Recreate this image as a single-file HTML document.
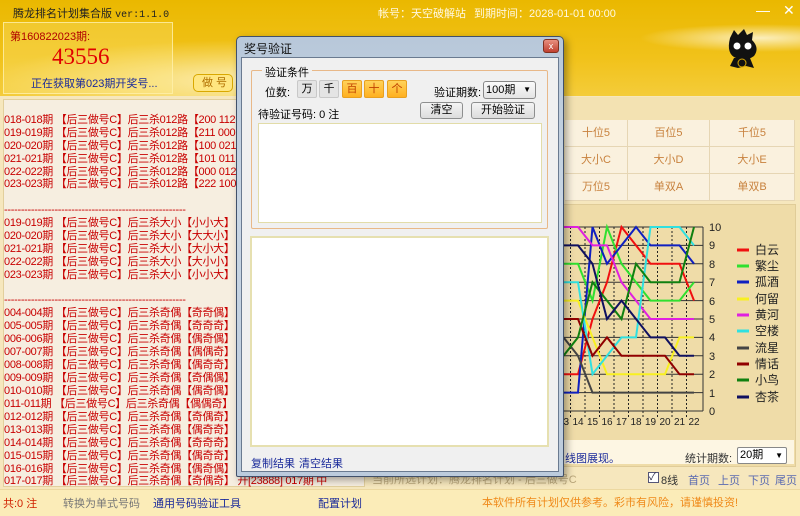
<!DOCTYPE html>
<html><head><meta charset="utf-8"><style>
*{margin:0;padding:0;box-sizing:border-box}
body{width:800px;height:516px;overflow:hidden;position:relative;font-family:"Liberation Sans","Noto Sans CJK SC",sans-serif;font-size:11px;background:#f6e7bd}
.a{position:absolute;white-space:nowrap}
#hdr{left:0;top:0;width:800px;height:96px;background:radial-gradient(ellipse 260px 40px at 250px 80px,rgba(255,250,220,.75),rgba(255,255,255,0)),radial-gradient(ellipse 120px 14px at 760px 38px,rgba(255,250,230,.8),rgba(255,255,255,0)),linear-gradient(180deg,#eab800 0%,#f1c21a 60%,#f4cc3a 100%)}
.row{position:absolute;left:4px;color:#c80000;font-size:11px;line-height:13px;white-space:nowrap;letter-spacing:-0.3px}
.cell{position:absolute;color:#c8823e;font-size:11px;text-align:center;border-right:1px solid #e6d6b4;border-bottom:1px solid #e6d6b4;background:#faf1de;line-height:26px}
.btn{position:absolute;border:1px solid #8e8f8f;border-radius:3px;background:linear-gradient(#f4f4f4,#dcdcdc);text-align:center;font-size:11px;line-height:15px}
.ob{position:absolute;border:1px solid #e8a020;border-radius:2px;background:linear-gradient(#ffd25a,#ffb020);text-align:center;color:#c04000;font-size:11px;line-height:17px;width:20px;height:18px;top:80px}
.gb{position:absolute;border:1px solid #c8c8c8;border-radius:2px;background:#e4e4e4;text-align:center;font-size:11px;line-height:17px;width:20px;height:18px;top:80px}
</style></head><body>
<div id="hdr" class="a"></div>
<div class="a" style="left:13px;top:5px;font-size:11px;color:#222">腾龙排名计划集合版 <span style="font-family:'Liberation Mono',monospace;font-size:10px">ver:1.1.0</span></div>
<div class="a" style="left:378px;top:5px;color:#fff8e0;font-size:11px">帐号：天空破解站</div>
<div class="a" style="left:474px;top:5px;color:#fff8e0;font-size:11px">到期时间：2028-01-01 00:00</div>
<div class="a" style="left:756px;top:2px;color:#fff;font-size:14px">—</div>
<div class="a" style="left:783px;top:2px;color:#fff;font-size:14px">✕</div>
<div class="a" style="left:3px;top:22px;width:170px;height:72px;border:1px solid rgba(255,240,170,.8);background:rgba(255,240,150,.25)"></div>
<div class="a" style="left:10px;top:28px;color:#b00000;font-size:11px">第160822023期:</div>
<div class="a" style="left:52px;top:44px;color:#e00000;font-size:23px;font-family:'Liberation Serif',serif">43556</div>
<div class="a" style="left:31px;top:75px;color:#1a2a9a;font-size:11px">正在获取第023期开奖号...</div>
<div class="a" style="left:193px;top:74px;width:40px;height:18px;border:1px solid #d9a800;border-radius:5px;background:#ffe680;color:#b07000;line-height:16px;padding-left:8px">做 号</div>
<svg class="a" style="left:720px;top:26px" width="50" height="50" viewBox="0 0 50 50">
<path d="M10 12 L14 4 L18 9 L24 3 L27 9 L33 6 L32 14 Q40 22 34 30 Q26 36 16 32 Q6 28 10 12Z" fill="#111"/>
<circle cx="17" cy="20" r="3.5" fill="#fff"/><circle cx="28" cy="20" r="3.5" fill="#fff"/>
<path d="M14 32 L30 32 L34 42 L26 40 L18 42 L10 40Z" fill="#111"/>
<circle cx="22" cy="37" r="4" fill="none" stroke="#d9a800" stroke-width="1"/>
</svg>
<div class="a" style="left:3px;top:99px;width:362px;height:388px;background:#f6eee0;border:1px solid #e2cf9c"></div>
<div class="row" style="top:114px">018-018期 【后三做号C】后三杀012路【200 112 222】</div>
<div class="row" style="top:127px">019-019期 【后三做号C】后三杀012路【211 000 011】</div>
<div class="row" style="top:140px">020-020期 【后三做号C】后三杀012路【100 021 111】</div>
<div class="row" style="top:153px">021-021期 【后三做号C】后三杀012路【101 011 120】</div>
<div class="row" style="top:166px">022-022期 【后三做号C】后三杀012路【000 012 121】</div>
<div class="row" style="top:178px">023-023期 【后三做号C】后三杀012路【222 100 201】</div>
<div class="row" style="top:204px">------------------------------------------------------</div>
<div class="row" style="top:217px">019-019期 【后三做号C】后三杀大小【小小大】 开[8</div>
<div class="row" style="top:230px">020-020期 【后三做号C】后三杀大小【大大小】 开[2</div>
<div class="row" style="top:243px">021-021期 【后三做号C】后三杀大小【大小大】 开[9</div>
<div class="row" style="top:256px">022-022期 【后三做号C】后三杀大小【大小小】 开[0</div>
<div class="row" style="top:269px">023-023期 【后三做号C】后三杀大小【小小大】 等待</div>
<div class="row" style="top:294px">------------------------------------------------------</div>
<div class="row" style="top:307px">004-004期 【后三做号C】后三杀奇偶【奇奇偶】 开[4</div>
<div class="row" style="top:320px">005-005期 【后三做号C】后三杀奇偶【奇奇奇】 开[7</div>
<div class="row" style="top:333px">006-006期 【后三做号C】后三杀奇偶【偶奇偶】 开[2</div>
<div class="row" style="top:346px">007-007期 【后三做号C】后三杀奇偶【偶偶奇】 开[0</div>
<div class="row" style="top:359px">008-008期 【后三做号C】后三杀奇偶【偶奇奇】 开[8</div>
<div class="row" style="top:372px">009-009期 【后三做号C】后三杀奇偶【奇偶偶】 开[9</div>
<div class="row" style="top:385px">010-010期 【后三做号C】后三杀奇偶【偶奇偶】 开[5</div>
<div class="row" style="top:398px">011-011期 【后三做号C】后三杀奇偶【偶偶奇】 开[5</div>
<div class="row" style="top:411px">012-012期 【后三做号C】后三杀奇偶【奇偶奇】 开[0</div>
<div class="row" style="top:424px">013-013期 【后三做号C】后三杀奇偶【偶奇奇】 开[6</div>
<div class="row" style="top:437px">014-014期 【后三做号C】后三杀奇偶【奇奇奇】 开[3</div>
<div class="row" style="top:450px">015-015期 【后三做号C】后三杀奇偶【偶奇奇】 开[0</div>
<div class="row" style="top:463px">016-016期 【后三做号C】后三杀奇偶【偶奇偶】 开[0</div>
<div class="row" style="top:475px">017-017期 【后三做号C】后三杀奇偶【奇偶奇】 开[23888] 017期 中</div>
<div class="a" style="left:0;top:489px;width:800px;height:27px;background:#fbecb8;border-top:1px solid #ecd8a0"></div>
<div class="a" style="left:3px;top:495px;color:#d02000">共:0 注</div>
<div class="a" style="left:63px;top:495px;color:#777">转换为单式号码</div>
<div class="a" style="left:153px;top:495px;color:#1a2a9a">通用号码验证工具</div>
<div class="a" style="left:318px;top:495px;color:#1a2a9a">配置计划</div>
<div class="a" style="left:482px;top:494px;color:#ef8a1a">本软件所有计划仅供参考。彩市有风险，请谨慎投资!</div>
<div class="a" style="left:372px;top:471px;color:#b9a67a">当前所选计划：腾龙排名计划 - 后三做号C</div>
<div class="a" style="left:565px;top:97px;width:235px;height:23px;background:#f3e2b2"></div>
<div class="cell" style="left:565px;top:120px;width:63px;height:27px">十位5</div>
<div class="cell" style="left:628px;top:120px;width:82px;height:27px">百位5</div>
<div class="cell" style="left:710px;top:120px;width:85px;height:27px">千位5</div>
<div class="cell" style="left:565px;top:147px;width:63px;height:27px">大小C</div>
<div class="cell" style="left:628px;top:147px;width:82px;height:27px">大小D</div>
<div class="cell" style="left:710px;top:147px;width:85px;height:27px">大小E</div>
<div class="cell" style="left:565px;top:174px;width:63px;height:27px">万位5</div>
<div class="cell" style="left:628px;top:174px;width:82px;height:27px">单双A</div>
<div class="cell" style="left:710px;top:174px;width:85px;height:27px">单双B</div>
<div class="a" style="left:540px;top:204px;width:256px;height:263px;background:#efdca8;border:1px solid #e0cc98"></div>
<div class="a" style="left:540px;top:440px;width:254px;height:24px;background:#fdf6e3"></div>
<div class="a" style="left:565px;top:450px;color:#1a2a9a">线图展现。</div>
<div class="a" style="left:685px;top:450px;color:#333">统计期数:</div>
<div class="a" style="left:737px;top:447px;width:50px;height:17px;border:1px solid #888;border-radius:2px;background:#fff;font-size:11px;line-height:15px;padding-left:2px">20期<span style="position:absolute;right:3px;font-size:8px">▼</span></div>
<div class="a" style="left:648px;top:472px;width:11px;height:11px;border:1px solid #557;background:#fff;font-size:10px;line-height:9px;color:#224">✓</div>
<div class="a" style="left:661px;top:472px;color:#333">8线</div>
<div class="a" style="left:688px;top:472px;color:#5a6ab0">首页</div>
<div class="a" style="left:718px;top:472px;color:#5a6ab0">上页</div>
<div class="a" style="left:748px;top:472px;color:#5a6ab0">下页</div>
<div class="a" style="left:775px;top:472px;color:#5a6ab0">尾页</div>
<svg class="a" style="left:540px;top:200px" width="260" height="265" viewBox="540 200 260 265">
<g stroke="#333" stroke-width="1">
<line x1="545" y1="227" x2="703" y2="227"/><line x1="545" y1="245.4" x2="703" y2="245.4"/><line x1="545" y1="263.8" x2="703" y2="263.8"/><line x1="545" y1="282.2" x2="703" y2="282.2"/><line x1="545" y1="300.6" x2="703" y2="300.6"/><line x1="545" y1="319" x2="703" y2="319"/><line x1="545" y1="337.4" x2="703" y2="337.4"/><line x1="545" y1="355.8" x2="703" y2="355.8"/><line x1="545" y1="374.2" x2="703" y2="374.2"/><line x1="545" y1="392.6" x2="703" y2="392.6"/><line x1="545" y1="411" x2="703" y2="411"/>
<line x1="703" y1="227" x2="703" y2="411"/>
</g>
<g stroke="#222" stroke-width="1" stroke-dasharray="2,2">
<line x1="556" y1="227" x2="556" y2="418"/><line x1="570.5" y1="227" x2="570.5" y2="418"/><line x1="585" y1="227" x2="585" y2="418"/><line x1="599.5" y1="227" x2="599.5" y2="418"/><line x1="614" y1="227" x2="614" y2="418"/><line x1="628.5" y1="227" x2="628.5" y2="418"/><line x1="643" y1="227" x2="643" y2="418"/><line x1="657.5" y1="227" x2="657.5" y2="418"/><line x1="672" y1="227" x2="672" y2="418"/><line x1="686.5" y1="227" x2="686.5" y2="418"/>
</g>
<g fill="none" stroke-width="2">
<polyline stroke="#f01010" points="563.5,374.2 578,374.2 592.5,319 607,282.2 621.5,227 636,245.4 650.5,263.8 665,263.8 679.5,263.8 694,300.6"/>
<polyline stroke="#30e030" points="563.5,263.8 578,263.8 592.5,300.6 607,227 621.5,263.8 636,282.2 650.5,300.6 665,300.6 679.5,300.6 694,282.2"/>
<polyline stroke="#1020c0" points="563.5,392.6 578,392.6 592.5,227 607,263.8 621.5,245.4 636,227 650.5,245.4 665,245.4 679.5,245.4 694,263.8"/>
<polyline stroke="#f8f020" points="563.5,300.6 578,300.6 592.5,337.4 607,374.2 621.5,374.2 636,374.2 650.5,374.2 665,374.2 679.5,337.4 694,337.4"/>
<polyline stroke="#e020e0" points="563.5,227 578,227 592.5,245.4 607,245.4 621.5,282.2 636,300.6 650.5,319 665,319 679.5,319 694,319"/>
<polyline stroke="#30e0e0" points="563.5,282.2 578,282.2 592.5,374.2 607,355.8 621.5,337.4 636,337.4 650.5,227 665,227 679.5,227 694,245.4"/>
<polyline stroke="#444" points="563.5,337.4 578,355.8 592.5,392.6 694,392.6"/>
<polyline stroke="#900000" points="563.5,319 578,319 592.5,355.8 607,337.4 621.5,355.8 665,355.8 679.5,374.2 694,374.2"/>
<polyline stroke="#108010" points="563.5,355.8 578,337.4 592.5,282.2 607,300.6 621.5,319 636,263.8 650.5,282.2 679.5,282.2 694,227"/>
<polyline stroke="#101060" points="563.5,245.4 578,245.4 592.5,263.8 607,319 621.5,300.6 636,319 650.5,337.4 665,337.4 679.5,355.8 694,355.8"/>
</g>
<g font-size="11" fill="#222" font-family="Liberation Sans,sans-serif">
<text x="709" y="231">10</text><text x="709" y="249">9</text><text x="709" y="268">8</text><text x="709" y="286">7</text><text x="709" y="305">6</text><text x="709" y="323">5</text><text x="709" y="341">4</text><text x="709" y="360">3</text><text x="709" y="378">2</text><text x="709" y="397">1</text><text x="709" y="415">0</text>
</g>
<g font-size="10" fill="#222" font-family="Liberation Sans,sans-serif" text-anchor="middle">
<text x="563.5" y="425">13</text><text x="578" y="425">14</text><text x="592.5" y="425">15</text><text x="607" y="425">16</text><text x="621.5" y="425">17</text><text x="636" y="425">18</text><text x="650.5" y="425">19</text><text x="665" y="425">20</text><text x="679.5" y="425">21</text><text x="694" y="425">22</text>
</g>
<g stroke-width="3">
<line x1="737" y1="250" x2="749" y2="250" stroke="#f01010"/><line x1="737" y1="266" x2="749" y2="266" stroke="#30e030"/><line x1="737" y1="282" x2="749" y2="282" stroke="#1020c0"/><line x1="737" y1="299" x2="749" y2="299" stroke="#f8f020"/><line x1="737" y1="315" x2="749" y2="315" stroke="#e020e0"/><line x1="737" y1="331" x2="749" y2="331" stroke="#30e0e0"/><line x1="737" y1="348" x2="749" y2="348" stroke="#444"/><line x1="737" y1="364" x2="749" y2="364" stroke="#900000"/><line x1="737" y1="380" x2="749" y2="380" stroke="#108010"/><line x1="737" y1="397" x2="749" y2="397" stroke="#101060"/>
</g>
<g font-size="12" fill="#222" font-family="Liberation Sans,Noto Sans CJK SC,sans-serif">
<text x="755" y="254">白云</text><text x="755" y="270">繁尘</text><text x="755" y="286">孤酒</text><text x="755" y="303">何留</text><text x="755" y="319">黄河</text><text x="755" y="335">空楼</text><text x="755" y="352">流星</text><text x="755" y="368">情话</text><text x="755" y="384">小鸟</text><text x="755" y="401">杏茶</text>
</g>
</svg>
<div class="a" style="left:236px;top:36px;width:328px;height:441px;background:linear-gradient(180deg,#b8c8da,#c9d6e4 40%,#bccbdc);border:1px solid #40506a;border-radius:5px 5px 2px 2px;box-shadow:3px 3px 8px rgba(0,0,0,.35)"></div>
<div class="a" style="left:244px;top:40px;font-size:12px;color:#111">奖号验证</div>
<div class="a" style="left:543px;top:39px;width:16px;height:14px;background:linear-gradient(#e89080,#c04030);border:1px solid #803020;border-radius:3px;color:#fff;font-size:9px;text-align:center;line-height:12px">x</div>
<div class="a" style="left:241px;top:57px;width:318px;height:415px;background:#f0f0f0;border:1px solid #6a7a90"></div>
<div class="a" style="left:251px;top:70px;width:297px;height:159px;border:1px solid #e8b888;border-radius:2px"></div>
<div class="a" style="left:262px;top:64px;background:#f0f0f0;padding:0 3px">验证条件</div>
<div class="a" style="left:265px;top:84px">位数:</div>
<div class="gb" style="left:297px">万</div>
<div class="gb" style="left:319px">千</div>
<div class="ob" style="left:342px">百</div>
<div class="ob" style="left:364px">十</div>
<div class="ob" style="left:387px">个</div>
<div class="a" style="left:434px;top:84px">验证期数:</div>
<div class="a" style="left:483px;top:81px;width:53px;height:18px;border:1px solid #888;border-radius:3px;background:linear-gradient(#fafafa,#e4e4e4);font-size:11px;line-height:16px;padding-left:2px">100期<span style="position:absolute;right:4px;font-size:8px">▼</span></div>
<div class="btn" style="left:420px;top:102px;width:43px;height:17px">清空</div>
<div class="btn" style="left:471px;top:102px;width:64px;height:17px">开始验证</div>
<div class="a" style="left:258px;top:106px">待验证号码: 0 注</div>
<div class="a" style="left:258px;top:123px;width:284px;height:100px;background:#fff;border:1px solid #e2dca8"></div>
<div class="a" style="left:250px;top:236px;width:299px;height:211px;background:#fff;border:2px solid #e6e0b0"></div>
<div class="a" style="left:251px;top:455px;color:#1a2a9a">复制结果</div>
<div class="a" style="left:299px;top:455px;color:#1a2a9a">清空结果</div>
</body></html>
